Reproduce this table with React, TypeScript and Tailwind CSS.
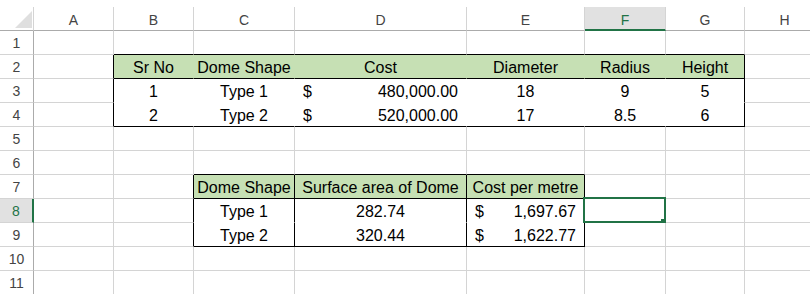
type Edge = 'grid' | 'black' | 'white' | 'green';

const columns = ['A', 'B', 'C', 'D', 'E', 'F', 'G', 'H'];
const rowCount = 11;

// cell values by row number; a leading "$" means accounting format
const sheet: Record<number, string[]> = {
    2: ['', 'Sr No', 'Dome Shape', 'Cost', 'Diameter', 'Radius', 'Height', ''],
    3: ['', '1', 'Type 1', '$480,000.00', '18', '9', '5', ''],
    4: ['', '2', 'Type 2', '$520,000.00', '17', '8.5', '6', ''],
    7: ['', '', 'Dome Shape', 'Surface area of Dome', 'Cost per metre', '', '', ''],
    8: ['', '', 'Type 1', '282.74', '$1,697.67', '', '', ''],
    9: ['', '', 'Type 2', '320.44', '$1,622.77', '', '', ''],
};

const selected = { row: 8, col: 5 };

const rightClass: Record<Edge, string> = {
    grid: 'border-r-[#d4d4d4]',
    black: 'border-r-black',
    white: 'border-r-white',
    green: 'border-r-[#c6e0b4]',
};

const bottomClass: Record<Edge, string> = {
    grid: 'border-b-[#d4d4d4]',
    black: 'border-b-black',
    white: 'border-b-white',
    green: 'border-b-[#c6e0b4]',
};

const inTop = (r: number, c: number) => r >= 2 && r <= 4 && c >= 1 && c <= 6;
const inLower = (r: number, c: number) => r >= 7 && r <= 9 && c >= 2 && c <= 4;

function isFilled(r: number, c: number) {
    return (r === 2 && c >= 1 && c <= 6) || (r === 7 && c >= 2 && c <= 4);
}

function rightEdge(r: number, c: number): Edge {
    if (r >= 2 && r <= 4) {
        if (c === 0 || c === 6) return 'black';
        if (c >= 1 && c <= 5) return r === 2 ? 'green' : 'white';
    }
    if (r >= 7 && r <= 9 && c >= 1 && c <= 4) return 'black';
    return 'grid';
}

function bottomEdge(r: number, c: number): Edge {
    if (c >= 1 && c <= 6) {
        if (r === 1 || r === 2 || r === 4) return 'black';
        if (r === 3) return 'white';
    }
    if (c >= 2 && c <= 4) {
        if (r === 6 || r === 7 || r === 9) return 'black';
        if (r === 8) return 'white';
    }
    return 'grid';
}

function SheetCell({ r, c }: { r: number; c: number }) {
    const value = sheet[r]?.[c] ?? '';
    const isSel = r === selected.row && c === selected.col;
    const bg = isFilled(r, c) ? 'bg-[#c6e0b4]' : 'bg-white';
    const tableCell = inTop(r, c) || inLower(r, c);

    return (
        <div
            className={`relative h-[24px] border-r border-b ${rightClass[rightEdge(r, c)]} ${bottomClass[bottomEdge(r, c)]} ${bg} flex items-end pb-[2px] text-[16px] leading-none text-black whitespace-nowrap`}
        >
            {value.startsWith('$') ? (
                <div className="flex w-full justify-between pl-[8px] pr-[8px]">
                    <span>$</span>
                    <span>{value.slice(1)}</span>
                </div>
            ) : tableCell && value ? (
                <div className="w-full text-center">{value}</div>
            ) : null}

            {isSel && (
                <>
                    <div className="absolute -top-[2px] -left-[2px] -right-[1px] -bottom-[1px] border-2 border-[#217346]" />
                    <div className="absolute -right-[1px] -bottom-[2px] w-[5px] h-[5px] bg-[#217346]" />
                </>
            )}
        </div>
    );
}

export default function App() {
    return (
        <div className="w-[810px] h-[294px] overflow-hidden bg-white pt-[7px] font-['Liberation_Sans',Arial,sans-serif]">
            <div className="grid w-[825px] grid-cols-[34px_80px_80px_101px_172px_118px_81px_79px_80px]">
                {/* corner */}
                <div className="h-[24px] border-r border-b border-r-[#d4d4d4] border-b-[#ababab] flex items-end justify-end pr-[1px] pb-[2px]">
                    <svg width="17" height="17" viewBox="0 0 17 17">
                        <polygon points="17,0 17,17 0,17" fill="#dfdfdf" />
                    </svg>
                </div>

                {/* column headers */}
                {columns.map((col, i) => {
                    const active = i === selected.col;
                    return (
                        <div
                            key={col}
                            className={`h-[24px] border-r border-r-[#d4d4d4] flex items-end justify-center text-[14px] leading-none ${
                                active
                                    ? 'bg-[#e1e1e1] text-[#217346] border-b-2 border-b-[#217346] pb-[2px]'
                                    : 'bg-white text-[#444444] border-b border-b-[#ababab] pb-[3px]'
                            }`}
                        >
                            {col}
                        </div>
                    );
                })}

                {Array.from({ length: rowCount }, (_, idx) => {
                    const r = idx + 1;
                    const active = r === selected.row;
                    return [
                        <div
                            key={`h${r}`}
                            className={`h-[24px] border-b border-b-[#d4d4d4] flex items-end justify-center pb-[4px] text-[14px] leading-none ${
                                active
                                    ? 'bg-[#e1e1e1] text-[#217346] border-r-2 border-r-[#217346]'
                                    : 'bg-white text-[#444444] border-r border-r-[#ababab]'
                            }`}
                        >
                            {r}
                        </div>,
                        ...columns.map((_, c) => <SheetCell key={`${r}-${c}`} r={r} c={c} />),
                    ];
                })}
            </div>
        </div>
    );
}
